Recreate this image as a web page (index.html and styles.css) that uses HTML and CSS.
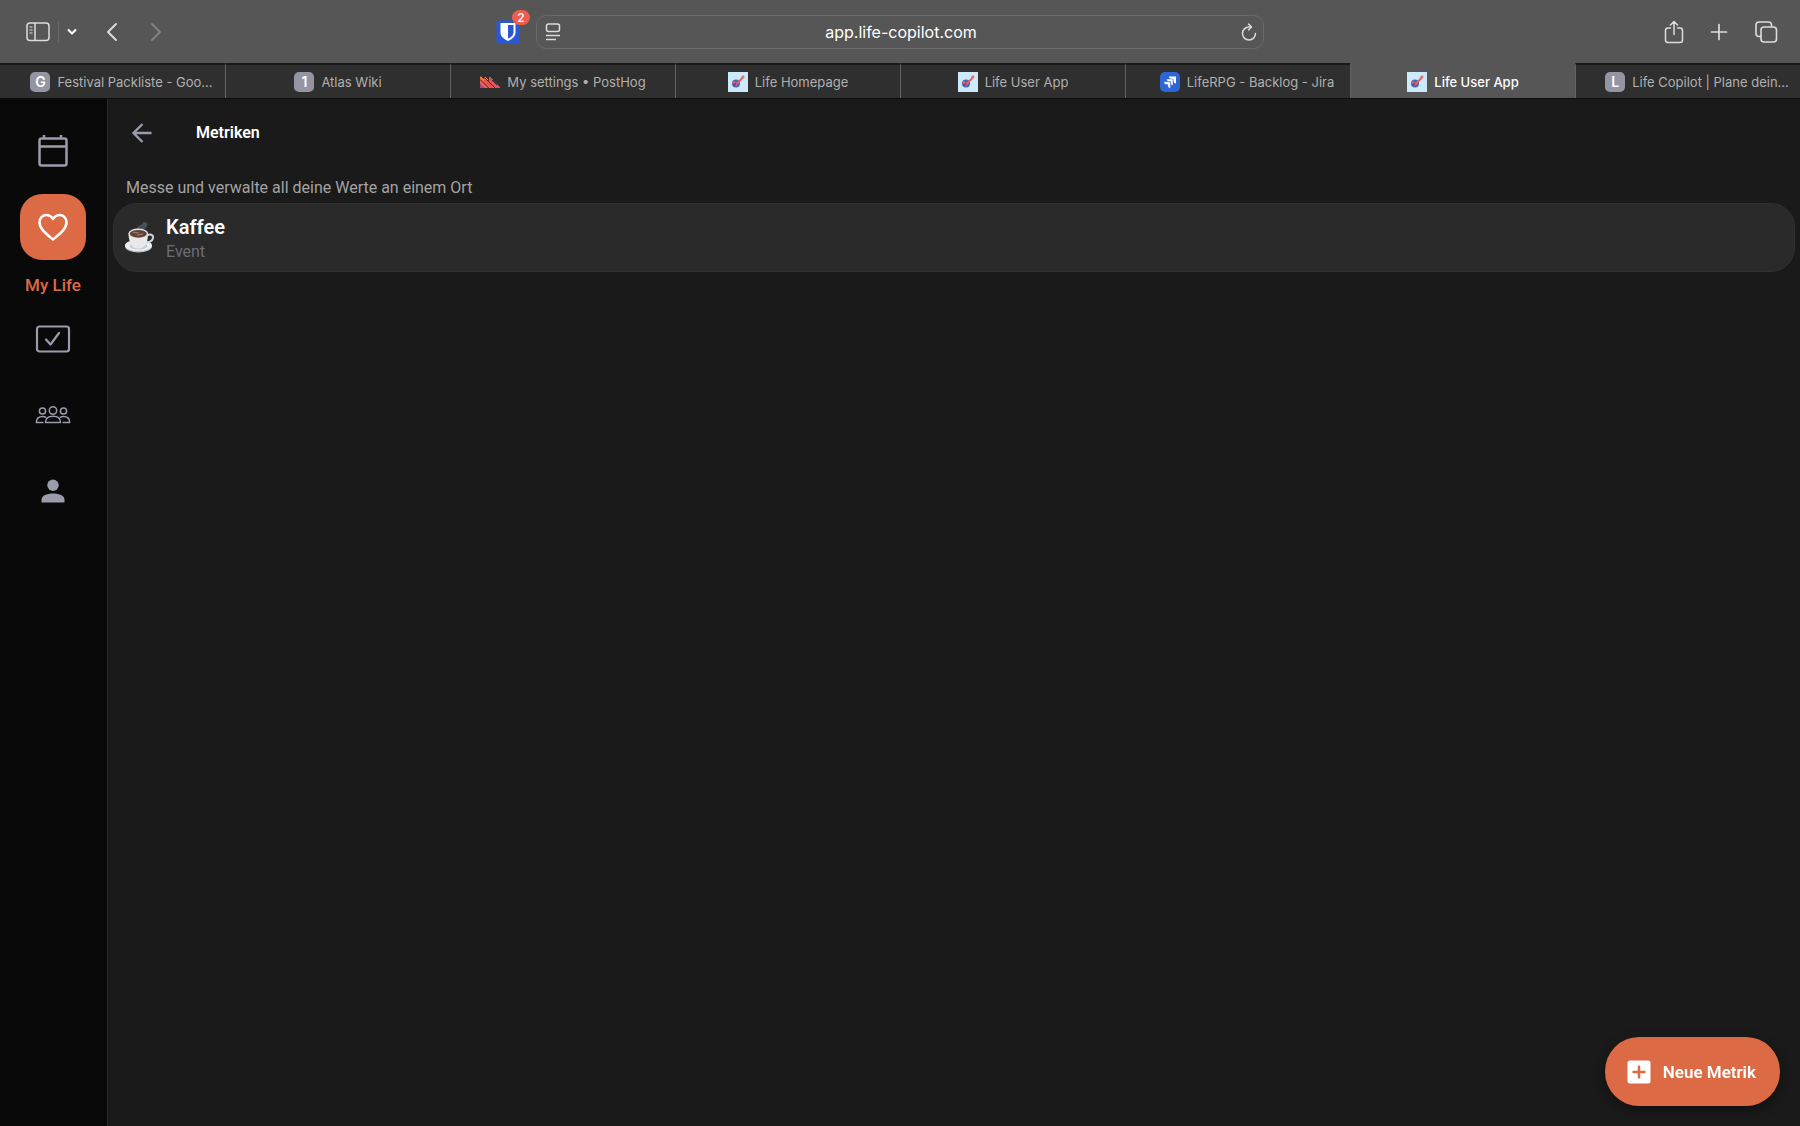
FILE: index.html
```html
<!DOCTYPE html>
<html lang="de">
<head>
<meta charset="utf-8">
<meta name="viewport" content="width=device-width, initial-scale=1">
<title>Life User App</title>
<link rel="stylesheet" href="styles.css">
</head>
<body>
<svg class="sprite" aria-hidden="true">
  <symbol id="life" viewBox="0 0 20 20">
    <path fill="#cdeafc" d="M0 0h20v20H0z"/>
    <circle cx="8" cy="11.500" r="4" fill="#4a68b5"/>
    <path d="M5 9.500l3 3L15.500 5" fill="none" stroke="#e8605e" stroke-width="2"/>
    <path d="M13.500 6l2.500-2" stroke="#e57a72" stroke-width="2.500"/>
    <path d="M5.500 13.500l2.500-2" stroke="#7a3a68" stroke-width="1.500"/>
  </symbol>
</svg>
<header class="browser">
  <div class="toolbar">
    <div class="toolbar-left">
      <button class="tool sidebar-tool" aria-label="Seitenleiste"><svg width="24" height="20" viewBox="0 0 24 20" fill="none" stroke="currentColor" stroke-width="1.500"><rect x="1" y="1" width="22" height="17.500" rx="3"/><path d="M9 1v17.500"/><path d="M3.500 5h3M3.500 8h3M3.500 11h3" stroke-width="1.200"/></svg></button>
      <span class="rule"></span>
      <button class="tool menu-tool" aria-label="Tabgruppen"><svg width="10" height="8" viewBox="0 0 10 8" fill="none" stroke="currentColor" stroke-width="2" stroke-linecap="round" stroke-linejoin="round"><path d="M1.500 2L5 5.500 8.500 2"/></svg></button>
      <button class="tool back-tool" aria-label="Zurück"><svg width="12" height="20" viewBox="0 0 12 20" fill="none" stroke="currentColor" stroke-width="2" stroke-linecap="round" stroke-linejoin="round"><path d="M10 2L2 10l8 8"/></svg></button>
      <button class="tool forward-tool" aria-label="Vorwärts" disabled><svg width="12" height="20" viewBox="0 0 12 20" fill="none" stroke="currentColor" stroke-width="2" stroke-linecap="round" stroke-linejoin="round"><path d="M2 2l8 8-8 8"/></svg></button>
      <button class="tool shield-tool" aria-label="Bitwarden"><svg width="24" height="24" viewBox="0 0 24 24"><rect x="0.500" y="0.500" width="23" height="23" rx="2.500" fill="#2b59d4"/><path d="M4.500 3h15v9.500c0 4-3.500 6.800-7.500 8.500-4-1.700-7.500-4.500-7.500-8.500z" fill="#fff"/><path d="M12 5h5.500v7.500c0 2.700-2.400 4.700-5.500 6.200z" fill="#2b59d4"/></svg><span class="badge">2</span></button>
    </div>
    <div class="address">
      <svg width="16" height="20" viewBox="0 0 16 20" fill="none" stroke="currentColor" stroke-width="1.500"><rect x="1.500" y="2" width="13" height="7.500" rx="2"/><path d="M1 13.500h14M1 17.500h10"/></svg>
      <input type="text" value="app.life-copilot.com" aria-label="Adresse">
      <button class="tool" aria-label="Neu laden"><svg width="16" height="20" viewBox="0 0 16 20" fill="none" stroke="currentColor" stroke-width="1.500" stroke-linecap="round" stroke-linejoin="round"><path d="M14.500 11.500A6.500 6.500 0 1 1 8 5h2"/><path d="M7.500 2L10.500 5 7.500 8"/></svg></button>
    </div>
    <div class="toolbar-right">
      <button class="tool" aria-label="Teilen"><svg width="20" height="24" viewBox="0 0 20 24" fill="none" stroke="currentColor" stroke-width="1.500" stroke-linecap="round" stroke-linejoin="round"><path d="M6.500 8H4a2.500 2.500 0 0 0-2.500 2.500v9.500A2.500 2.500 0 0 0 4 22.500h12a2.500 2.500 0 0 0 2.500-2.500v-9.500A2.500 2.500 0 0 0 16 8h-2.500M10 14.500V1.500M6.500 5L10 1.500 13.500 5"/></svg></button>
      <button class="tool" aria-label="Neuer Tab"><svg width="18" height="18" viewBox="0 0 18 18" fill="none" stroke="currentColor" stroke-width="1.700" stroke-linecap="round"><path d="M9 1.500v15M1.500 9h15"/></svg></button>
      <button class="tool" aria-label="Tabübersicht"><svg width="24" height="24" viewBox="0 0 24 24" fill="none" stroke="currentColor" stroke-width="1.600"><rect x="7" y="7" width="15.500" height="15" rx="3"/><path d="M7 16.500H5A3 3 0 0 1 2 13.500V5a3 3 0 0 1 3-3h9.500a3 3 0 0 1 3 3v2"/></svg></button>
    </div>
  </div>
  <nav class="tabs" aria-label="Tabs">
    <a class="tab tab-long" href="#"><span class="letter">G</span><span class="tab-name">Festival Packliste - Goo...</span></a>
    <a class="tab" href="#"><span class="letter">1</span><span class="tab-name">Atlas Wiki</span></a>
    <a class="tab" href="#"><svg width="20" height="20" viewBox="0 0 20 20"><path d="M0 4l12 12H0z" fill="#ee6a4c"/><path d="M4 4.500L16 16H8L4 12z" fill="#e8554f"/><path d="M9 4.500L20 15v1h-8L9 12z" fill="#e8505c"/><path d="M0 11l5 5H0z" fill="#b5418a"/><path d="M0 7.500l8.500 8.500M4 5l11 11M9 5l8 8" stroke="#402a2c" stroke-width="1"/><path d="M1 5l3 3M5 5l3 3M9.500 5l3 3" stroke="#f2a34c" stroke-width="1"/></svg><span class="tab-name">My settings • PostHog</span></a>
    <a class="tab" href="#"><svg width="20" height="20"><use href="#life"/></svg><span class="tab-name">Life Homepage</span></a>
    <a class="tab" href="#"><svg width="20" height="20"><use href="#life"/></svg><span class="tab-name">Life User App</span></a>
    <a class="tab tab-long" href="#"><svg width="20" height="20" viewBox="0 0 20 20"><rect width="20" height="20" rx="5" fill="#2f66d6"/><path d="M9 4.500h7v7c-1.800 0-2.700-1.200-2.700-2.700V7.200h-1.600C10.200 7.200 9 6.300 9 4.500z" fill="#fff"/><path d="M6.500 7h6.500v6.500c-1.700 0-2.500-1.100-2.500-2.500V9.600H9C7.600 9.600 6.500 8.700 6.500 7z" fill="#fff" stroke="#2f66d6" stroke-width="0.500"/><path d="M3.800 9.800h6.600v6.500c-1.700 0-2.600-1.100-2.600-2.500v-1.400H6.300c-1.400 0-2.500-.9-2.500-2.600z" fill="#fff" stroke="#2f66d6" stroke-width="0.500"/></svg><span class="tab-name">LifeRPG - Backlog - Jira</span></a>
    <a class="tab tab-active" href="#" aria-current="page"><svg width="20" height="20"><use href="#life"/></svg><span class="tab-name">Life User App</span></a>
    <a class="tab tab-long" href="#"><span class="letter">L</span><span class="tab-name">Life Copilot | Plane dein...</span></a>
  </nav>
</header>
<div class="app">
  <nav class="rail" aria-label="Hauptnavigation">
    <a class="rail-item" href="#" aria-label="Kalender"><svg width="30" height="34" viewBox="0 0 30 34" fill="none" stroke="currentColor" stroke-width="2.500"><rect x="1.500" y="4.500" width="27" height="27" rx="2"/><path d="M1.500 12.500h27M6 1v4M23 1v4"/></svg></a>
    <a class="rail-item rail-active" href="#"><span class="pill"><svg width="32" height="30" viewBox="0 0 32 30" fill="none" stroke="currentColor" stroke-width="2.500" stroke-linejoin="round"><path d="M16 27.500C8 20.800 2.500 16.500 2.500 10.200 2.500 6 5.500 3 9.300 3c2.700 0 5 1.400 6.700 4 1.700-2.600 4-4 6.700-4 3.800 0 6.800 3 6.800 7.200 0 6.300-5.500 10.600-13.500 17.300z"/></svg></span><span class="rail-label">My Life</span></a>
    <a class="rail-item" href="#" aria-label="Aufgaben"><svg width="36" height="28" viewBox="0 0 36 28" fill="none" stroke="currentColor" stroke-width="2.200" stroke-linecap="round" stroke-linejoin="round"><rect x="2" y="1.500" width="32" height="25" rx="2.500"/><path d="M11 14.500l4.500 5L24 8"/></svg></a>
    <a class="rail-item" href="#" aria-label="Gruppen"><svg width="36" height="20" viewBox="0 0 36 20" fill="none" stroke="currentColor" stroke-width="1.500" stroke-linejoin="round"><circle cx="18" cy="5.500" r="3.700"/><circle cx="7.500" cy="6" r="3.100"/><circle cx="28.500" cy="6" r="3.100"/><path d="M10.500 17.500c0-4.500 3.500-6.200 7.500-6.200s7.500 1.700 7.500 6.200zM8.500 17.500H1.300c0-4.200 2.500-6 6.200-6 1.500 0 2.700.3 3.700 1M27.500 17.500h7.200c0-4.200-2.500-6-6.200-6-1.500 0-2.700.3-3.700 1"/></svg></a>
    <a class="rail-item" href="#" aria-label="Profil"><svg width="24" height="24" viewBox="0 0 24 24" fill="currentColor"><circle cx="12" cy="6.200" r="5.700"/><path d="M.5 23.500v-2.700c0-4.200 5-6.300 11.500-6.300s11.500 2.100 11.500 6.300v2.700z"/></svg></a>
  </nav>
  <main class="main">
    <div class="page-head">
      <button class="back" aria-label="Zurück"><svg width="20" height="20" viewBox="0 0 20 20" fill="none" stroke="currentColor" stroke-width="2.300"><path d="M19.500 10H2.500M10.500 1L1.500 10l9 9"/></svg></button>
      <h1>Metriken</h1>
    </div>
    <p class="intro">Messe und verwalte all deine Werte an einem Ort</p>
    <a class="card" href="#">
      <svg width="30" height="32" viewBox="0 0 30 32">
        <path d="M13 7c0-3 6-2 6-6M17 7.500c1-2 5-2.500 4-5.500" fill="none" stroke="#465358" stroke-width="2.500" stroke-linecap="round"/>
        <ellipse cx="13.500" cy="24.500" rx="13.500" ry="6" fill="#b3c0c8"/><ellipse cx="13.500" cy="23.500" rx="13.500" ry="5.500" fill="#eceff1"/><ellipse cx="13.500" cy="24" rx="9" ry="3.500" fill="#c4ced3"/>
        <path d="M22 13.500c3-2 6.500-1 6 2.500-.5 3-4 4.500-7 4" fill="none" stroke="#cad5d9" stroke-width="2"/>
        <path d="M3.500 11h19.500c0 8-2 12-5 14.500-2.500 1.500-7 1.500-9.500 0C5.500 23 3.500 18 3.500 11z" fill="#e9e9e9"/>
        <ellipse cx="13.300" cy="11.500" rx="9.800" ry="5" fill="#dfe3e5"/><ellipse cx="13.300" cy="11.800" rx="8.500" ry="3.900" fill="#60443a"/>
        <path d="M8 11c2-2 4 1 6-.5M12 13.500c2-1.500 4 0 6-2" fill="none" stroke="#9c7462" stroke-width="1.200"/>
      </svg>
      <span class="card-text"><strong>Kaffee</strong><span class="kind">Event</span></span>
    </a>
  </main>
</div>
<button class="fab"><svg width="24" height="24" viewBox="0 0 24 24"><rect x="0.500" y="0.500" width="23" height="23" rx="2.500" fill="#fff"/><path d="M12 5.500v13M5.500 12h13" stroke="#dc6b45" stroke-width="2.500"/></svg>Neue Metrik</button>
</body>
</html>
```
FILE: styles.css
```css
* { box-sizing: border-box; }
body {
  margin: 0;
  min-height: 100vh;
  display: flex;
  flex-direction: column;
  background: #1a1a1a;
  color: #fff;
  font-family: Roboto, "Liberation Sans", sans-serif;
}
svg { display: block; flex: none; }
a { color: inherit; text-decoration: none; }
button { border: 0; padding: 0; background: none; color: inherit; font: inherit; cursor: pointer; }
.sprite { position: absolute; width: 0; height: 0; }

/* Browser chrome */
.browser { background: #565656; font-family: Inter, "Liberation Sans", sans-serif; }
.toolbar {
  display: grid;
  grid-template-columns: 1fr minmax(0, 728px) 1fr;
  align-items: center;
  height: 63px;
  color: #dcdcdc;
}
.toolbar-left { display: flex; align-items: center; padding: 0 16px 0 26px; }
.rule { width: 1px; height: 22px; margin: 0 8px; background: #6b6b6b; }
.menu-tool { color: #fff; }
.back-tool { margin-left: 29px; }
.forward-tool { margin-left: 32px; color: #808080; }
.shield-tool { position: relative; margin-left: auto; }
.badge {
  position: absolute;
  top: -10px;
  left: 16px;
  width: 18px;
  height: 15px;
  border-radius: 8px;
  background: #ee5d50;
  color: #fff;
  font-size: 12px;
  line-height: 15px;
  font-weight: 500;
}
.address {
  display: flex;
  align-items: center;
  height: 34px;
  padding: 0 6px 0 8px;
  border: 1px solid #6a6a6a;
  border-radius: 10px;
}
.address input {
  flex: 1;
  min-width: 0;
  padding: 0;
  border: 0;
  background: none;
  color: #fff;
  font: 400 16px/20px Inter, "Liberation Sans", sans-serif;
  text-align: center;
}
.toolbar-right { display: flex; align-items: center; justify-content: flex-end; gap: 26px; padding-right: 22px; }

.tabs {
  display: grid;
  grid-template-columns: repeat(8, minmax(0, 1fr));
  height: 36px;
  border-bottom: 1px solid #0c0c0c;
}
.tab {
  display: flex;
  align-items: center;
  justify-content: center;
  gap: 7px;
  padding: 0 10px;
  border-top: 2px solid #1a1a1a;
  border-left: 1px solid #626262;
  background: #2f2f2f;
  color: #b0b0b0;
  font-size: 13px;
  line-height: 20px;
}
.tab:first-child { border-left: 0; }
.tab-long { padding-left: 28px; }
.tab-active { border-top-color: #565656; background: #565656; color: #fff; font-weight: 500; }
.tab-name { overflow: hidden; white-space: nowrap; }
.letter {
  flex: none;
  width: 20px;
  height: 20px;
  border-radius: 5px;
  background: #9494a2;
  color: #fff;
  font-size: 14px;
  font-weight: 600;
  text-align: center;
}

/* Application */
.app { flex: 1; display: flex; }
.rail {
  flex: none;
  display: flex;
  flex-direction: column;
  gap: 10px;
  width: 108px;
  padding: 19px 1px 0 0;
  border-right: 1px solid #292929;
  background: #090909;
  color: #9a9cab;
}
.rail-item { display: flex; flex-direction: column; align-items: center; justify-content: center; min-height: 66px; }
.pill { display: grid; place-items: center; width: 66px; height: 66px; border-radius: 22px; background: #dc6b45; color: #fff; }
.rail-label { padding: 14px 0 0; color: #dc6b45; font-size: 17px; line-height: 22px; font-weight: 500; }
.main { flex: 1; min-width: 0; padding: 0 5px; }
.page-head { display: flex; align-items: center; gap: 44px; height: 68px; padding-left: 19px; }
.back { color: #9a9cab; }
h1 { margin: 0; font-size: 16px; line-height: 24px; font-weight: 600; }
.intro { margin: 11px 13px 5px; color: #a3a3a3; font-size: 16px; line-height: 20px; }
.card {
  display: flex;
  align-items: center;
  gap: 11px;
  min-height: 69px;
  padding: 0 11px;
  border: 1px solid #303030;
  border-radius: 24px;
  background: #2a2a2a;
}
.card-text { display: flex; flex-direction: column; }
.card-text strong { font-size: 20px; line-height: 28px; font-weight: 600; }
.kind { color: #6b6c7a; font-size: 16px; line-height: 22px; }
.fab {
  position: fixed;
  right: 20px;
  bottom: 20px;
  display: flex;
  align-items: center;
  gap: 12px;
  height: 69px;
  padding: 0 24px 0 22px;
  border-radius: 34px;
  background: #dc6b45;
  box-shadow: 0 4px 12px rgba(0, 0, 0, 0.4);
  color: #fff;
  font-size: 17px;
  font-weight: 600;
}
```
